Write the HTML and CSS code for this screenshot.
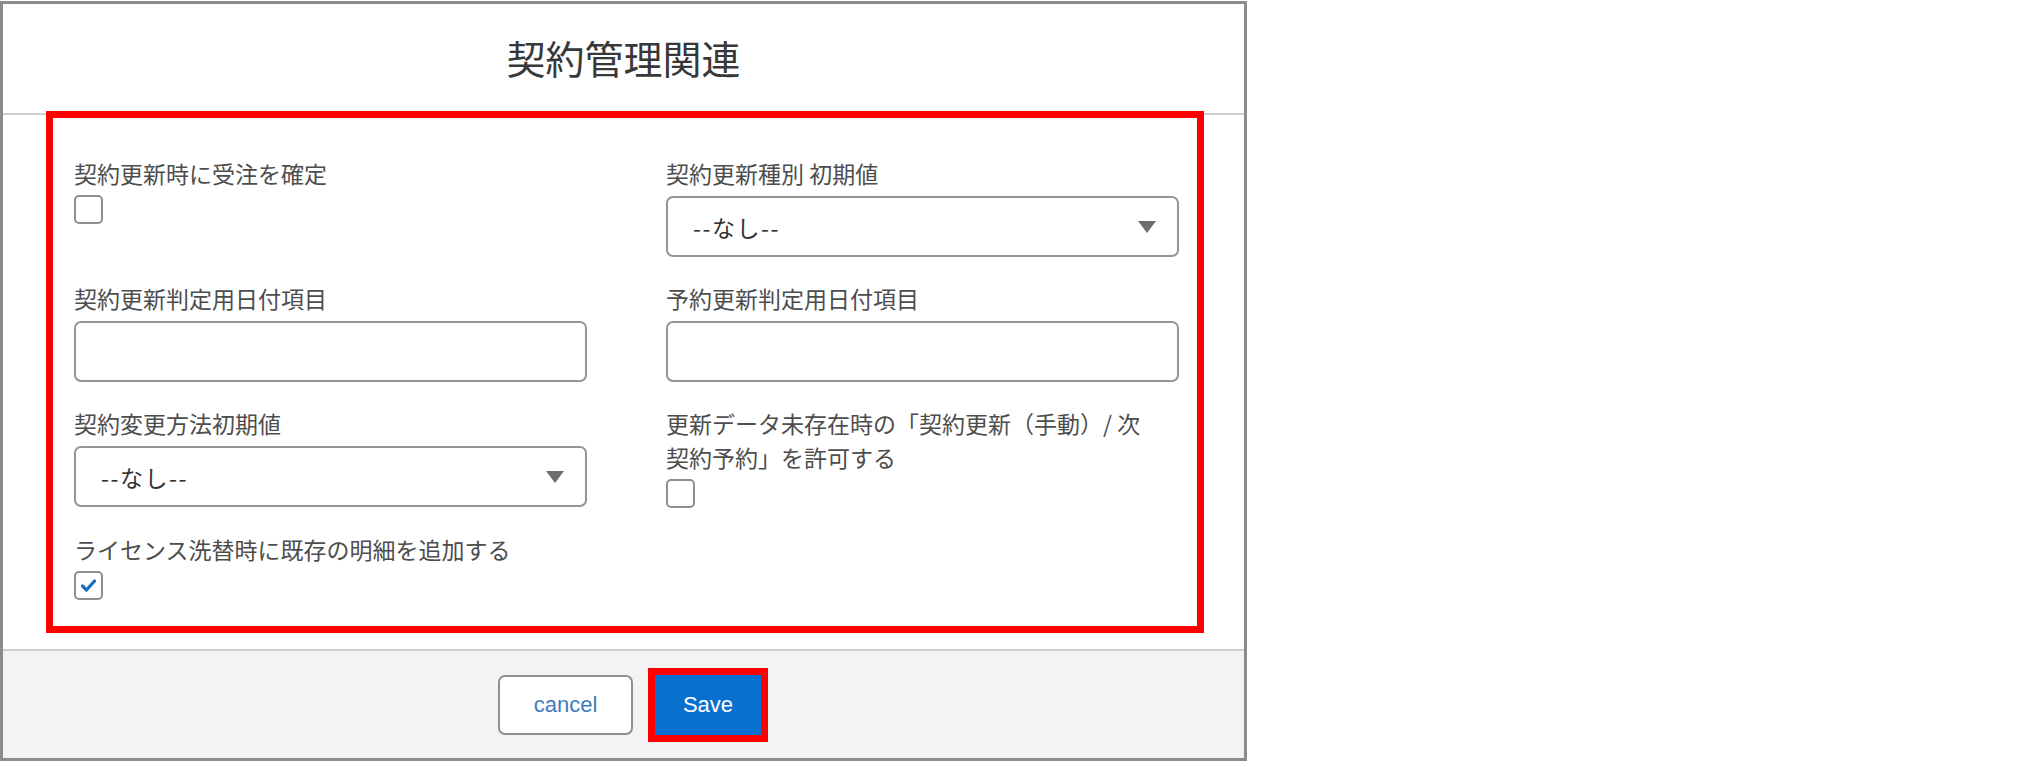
FILE: index.html
```html
<!DOCTYPE html>
<html lang="ja">
<head>
<meta charset="utf-8">
<title>契約管理関連</title>
<link rel="stylesheet" href="styles.css">
</head>
<body>
<div class="dialog">
  <div class="dialog-header">
    <h1 class="dialog-title">契約管理関連</h1>
  </div>
  <div class="dialog-body">
    <div class="highlight-box">
      <div class="form-grid">
        <div class="field">
          <div class="field-label">契約更新時に受注を確定</div>
          <span class="checkbox"></span>
        </div>
        <div class="field">
          <div class="field-label">契約更新種別 初期値</div>
          <div class="select">
            <span class="select-value">--なし--</span>
            <svg class="select-arrow" width="18" height="12" viewBox="0 0 18 12"><path d="M0 0 H18 L9 12 Z" fill="#6f6d6b"/></svg>
          </div>
        </div>
        <div class="field">
          <div class="field-label">契約更新判定用日付項目</div>
          <div class="text-input"></div>
        </div>
        <div class="field">
          <div class="field-label">予約更新判定用日付項目</div>
          <div class="text-input"></div>
        </div>
        <div class="field">
          <div class="field-label">契約変更方法初期値</div>
          <div class="select">
            <span class="select-value">--なし--</span>
            <svg class="select-arrow" width="18" height="12" viewBox="0 0 18 12"><path d="M0 0 H18 L9 12 Z" fill="#6f6d6b"/></svg>
          </div>
        </div>
        <div class="field">
          <div class="field-label">更新データ未存在時の「契約更新（手動）/ 次<br>契約予約」を許可する</div>
          <span class="checkbox"></span>
        </div>
        <div class="field">
          <div class="field-label">ライセンス洗替時に既存の明細を追加する</div>
          <span class="checkbox checked">
            <svg width="15" height="13" viewBox="0 0 15 13"><path d="M1.5 7 L5.5 11 L13.5 2" fill="none" stroke="#1a6cc2" stroke-width="3.2" stroke-linecap="round" stroke-linejoin="round"/></svg>
          </span>
        </div>
      </div>
    </div>
  </div>
  <div class="dialog-footer">
    <button class="btn btn-neutral" type="button">cancel</button>
    <button class="btn btn-brand" type="button">Save</button>
  </div>
</div>
</body>
</html>
```

FILE: styles.css
```css
html, body {
  margin: 0;
  padding: 0;
  background: #ffffff;
}

body {
  padding-top: 1px;
  font-family: "Noto Sans CJK JP", "Noto Sans", sans-serif;
  color: #444444;
}

.dialog {
  width: 1247px;
  box-sizing: border-box;
  border: 3px solid #8c8c8c;
  background: #ffffff;
}

.dialog-header {
  height: 109px;
  display: flex;
  align-items: center;
  justify-content: center;
  border-bottom: 2px solid #cfcfcf;
}

.dialog-title {
  margin: 0 0 4px 0;
  font-size: 39px;
  font-weight: 400;
  line-height: 44px;
  color: #383838;
  font-family: "Noto Sans CJK JP", sans-serif;
}

.dialog-body {
  padding: 0 40px 16px 43px;
}

.highlight-box {
  margin-top: -4px;
  border: 7px solid #ff0000;
  padding: 38px 17px 26px 21px;
}

.form-grid {
  display: grid;
  grid-template-columns: 513px 513px;
  column-gap: 79px;
  row-gap: 24px;
  align-items: start;
}

.field {
  display: flex;
  flex-direction: column;
  align-items: flex-start;
}

.field-label {
  font-size: 23px;
  line-height: 34px;
  color: #4d4d4d;
  white-space: nowrap;
}

.checkbox {
  margin-top: 5px;
  width: 29px;
  height: 29px;
  box-sizing: border-box;
  border: 2px solid #8e8e8e;
  border-radius: 5px;
  background: #ffffff;
  display: flex;
  align-items: center;
  justify-content: center;
}

.select,
.text-input {
  margin-top: 6px;
  width: 100%;
  box-sizing: border-box;
  border: 2px solid #959595;
  border-radius: 7px;
  background: #ffffff;
}

.select {
  height: 61px;
  display: flex;
  align-items: center;
  justify-content: space-between;
  padding: 0 21px 0 25px;
}

.text-input {
  height: 61px;
}

.select-value {
  font-size: 23px;
  color: #333333;
  line-height: 30px;
  letter-spacing: 1.5px;
}

.select-arrow {
  display: block;
}

.dialog-footer {
  height: 107px;
  border-top: 2px solid #cfcfcf;
  background: #f3f3f3;
  display: flex;
  align-items: center;
  justify-content: center;
  gap: 22px;
  padding-left: 12px;
}

.btn {
  height: 60px;
  box-sizing: border-box;
  font-family: "Liberation Sans", Arial, sans-serif;
  font-size: 22px;
  margin: 0;
  cursor: pointer;
}

.btn-neutral {
  width: 135px;
  background: #ffffff;
  border: 2px solid #8f8f8f;
  border-radius: 7px;
  color: #3d7cbe;
}

.btn-brand {
  width: 106px;
  background: #0a70cf;
  border: none;
  border-radius: 0;
  color: #ffffff;
  font-weight: 400;
  outline: 7px solid #ff0000;
}
```
